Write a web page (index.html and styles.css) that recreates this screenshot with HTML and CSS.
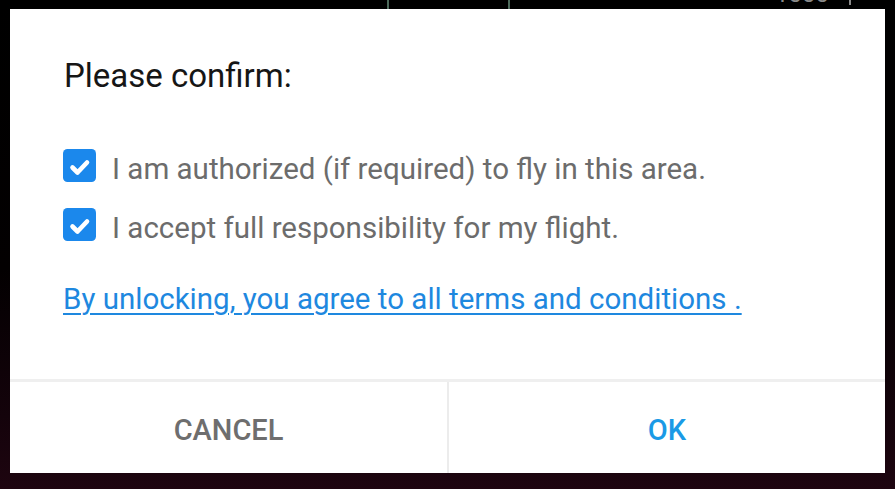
FILE: index.html
```html
<!DOCTYPE html>
<html>
<head>
<meta charset="utf-8">
<link rel="stylesheet" href="styles.css">
</head>
<body>
<div class="topbar">
  <div class="vline"></div>
  <div class="vline second"></div>
  <div class="readout">1000</div>
  <div class="tick"></div>
</div>
<div class="dialog">
  <div class="content">
    <h1 class="title">Please confirm:</h1>
    <div class="checks">
      <label class="check">
        <svg class="box" width="33" height="33" viewBox="0 0 33 33"><rect width="33" height="33" rx="4.5" fill="#1b88ec"/><path d="M9.5 18.5 L14.5 23.5 L24 13.5" fill="none" stroke="#fff" stroke-width="4.6" stroke-linecap="round" stroke-linejoin="round"/></svg>
        <span>I am authorized (if required) to fly in this area.</span>
      </label>
      <label class="check">
        <svg class="box" width="33" height="33" viewBox="0 0 33 33"><rect width="33" height="33" rx="4.5" fill="#1b88ec"/><path d="M9.5 18.5 L14.5 23.5 L24 13.5" fill="none" stroke="#fff" stroke-width="4.6" stroke-linecap="round" stroke-linejoin="round"/></svg>
        <span>I accept full responsibility for my flight.</span>
      </label>
    </div>
    <a class="terms" href="#">By unlocking, you agree to all terms and conditions .</a>
  </div>
  <div class="actions">
    <button class="btn cancel">CANCEL</button>
    <div class="divider"></div>
    <button class="btn ok">OK</button>
  </div>
</div>
</body>
</html>
```

FILE: styles.css
```css
html, body {
  margin: 0;
  padding: 0;
}
body {
  width: 895px;
  height: 489px;
  overflow: hidden;
  background: linear-gradient(to bottom, #000 0%, #030001 55%, #14030b 85%, #1e0510 100%);
  font-family: Roboto, "Noto Sans", sans-serif;
}
.topbar {
  height: 9px;
  display: flex;
  align-items: stretch;
  padding-left: 387px;
  overflow: hidden;
}
.vline {
  width: 2px;
  background: #4d6a5b;
}
.vline.second {
  margin-left: 119px;
}
.readout {
  margin-left: 265px;
  font-size: 24px;
  line-height: 24px;
  margin-top: -18px;
  color: #8a8a8a;
}
.tick {
  width: 2px;
  height: 5px;
  margin-left: 20px;
  background: #8a8a8a;
}
.dialog {
  margin-left: 10px;
  width: 875px;
  height: 464px;
  background: #fff;
  display: flex;
  flex-direction: column;
}
.content {
  flex: 1;
  padding: 48px 0 0 53px;
  display: flex;
  flex-direction: column;
  align-items: flex-start;
}
.title {
  margin: 0 0 0 1px;
  font-size: 33px;
  line-height: 38px;
  font-weight: 400;
  color: #161616;
}
.checks {
  margin-top: 54px;
  display: flex;
  flex-direction: column;
  gap: 22.5px;
}
.check {
  display: flex;
  align-items: flex-start;
  gap: 16px;
  font-size: 29.5px;
  line-height: 34px;
  color: #6c6c6c;
}
.check span {
  margin-top: 2.5px;
}
.box {
  display: block;
  flex: none;
}
.terms {
  margin-top: 37px;
  font-size: 29.5px;
  line-height: 34px;
  color: #1e88df;
  text-decoration: underline;
  text-underline-offset: 4px;
  text-decoration-thickness: 2px;
}
.actions {
  height: 91px;
  border-top: 3px solid #efefef;
  display: flex;
}
.btn {
  flex: 1;
  border: 0;
  background: #fff;
  font-family: Roboto, "Noto Sans", sans-serif;
  font-size: 29px;
  font-weight: 500;
  padding: 4px 0 0 0;
  margin: 0;
}
.cancel {
  color: #6e6e6e;
  flex: 0 0 437px;
}
.divider {
  width: 2px;
  background: #ececec;
}
.ok {
  color: #1a9ae6;
}
```
